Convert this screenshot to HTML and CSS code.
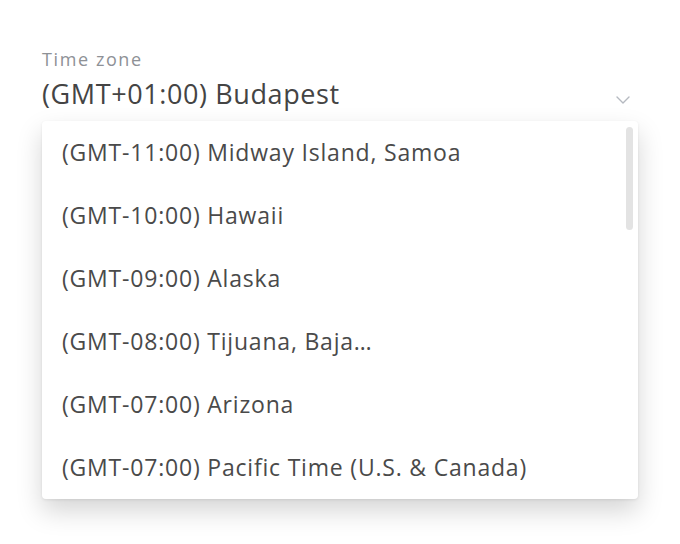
FILE: index.html
```html
<!DOCTYPE html>
<html lang="en">
<head>
  <meta charset="UTF-8" />
  <title>Time zone</title>
  <link rel="stylesheet" href="styles.css">
</head>
<body>
<div class="page">
  <div class="field">
    <div class="field-label">Time zone</div>
    <div class="field-control">
      <span class="field-value">(GMT+01:00) Budapest</span>
      <svg class="chevron" width="14" height="8" viewBox="0 0 14 8">
        <path d="M1 1l6 6 6-6" fill="none" stroke="#b5b9c0" stroke-width="1.4" stroke-linecap="round" stroke-linejoin="round"/>
      </svg>
    </div>

    <!-- dropdown list -->
    <div class="menu">
      <ul class="menu-list">
        <li>(GMT-11:00) Midway Island, Samoa</li>
        <li>(GMT-10:00) Hawaii</li>
        <li>(GMT-09:00) Alaska</li>
        <li>(GMT-08:00) Tijuana, Baja…</li>
        <li>(GMT-07:00) Arizona</li>
        <li>(GMT-07:00) Pacific Time (U.S. &amp; Canada)</li>
      </ul>
      <div class="scrollbar"></div>
    </div>
  </div>
</div>
</body>
</html>
```

FILE: styles.css
```css
body {
  margin: 0;
  background: #fff;
  font-family: 'Open Sans', 'Noto Sans', sans-serif;
  color: #444;
}

.page {
  padding: 47px 42px 44px 42px;
}

.field {
  width: 596px;
}

.field-label {
  font-size: 18px;
  line-height: 24px;
  letter-spacing: 1.6px;
  color: #8e9196;
}

.field-control {
  display: flex;
  align-items: flex-start;
  justify-content: space-between;
  box-sizing: border-box;
  height: 50px;
  padding-top: 6px;
}

.field-value {
  font-size: 27px;
  line-height: 34px;
  letter-spacing: 0.6px;
  color: #444;
}

.chevron {
  margin-right: 8px;
  margin-top: 19px;
}

/* 下拉菜单 */
.menu {
  position: relative;
  background: #fff;
  border-radius: 4px;
  box-shadow: 0 12px 26px rgba(0, 0, 0, 0.17), 0 1px 3px rgba(0, 0, 0, 0.08);
}

.menu-list {
  list-style: none;
  margin: 0;
  padding: 0;
}

.menu-list li {
  height: 63px;
  line-height: 63px;
  padding-left: 20px;
  font-size: 23px;
  letter-spacing: 0.8px;
  color: #4a4a4a;
  white-space: nowrap;
}

.scrollbar {
  position: absolute;
  top: 6px;
  right: 5px;
  width: 7px;
  height: 103px;
  border-radius: 4px;
  background: #e3e3e3;
}
```
